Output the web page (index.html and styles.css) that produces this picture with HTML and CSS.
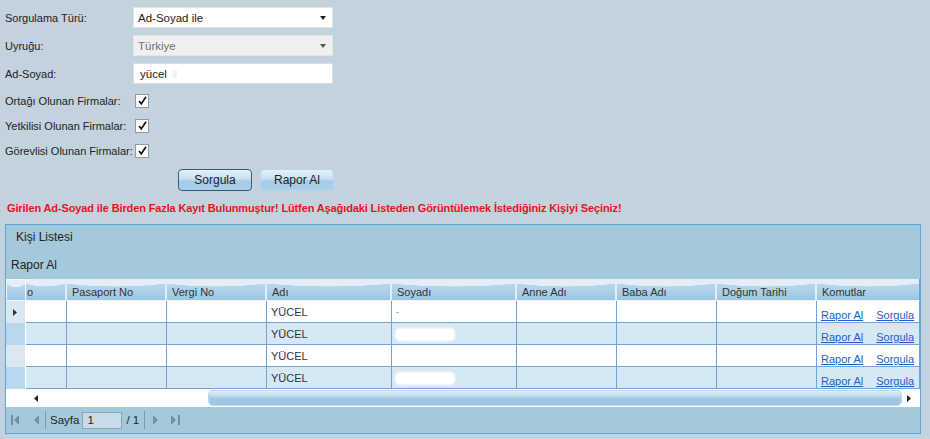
FILE: index.html
```html
<!DOCTYPE html>
<html lang="tr">
<head>
  <meta charset="UTF-8" />
  <title>Kişi Sorgulama</title>
  <link rel="stylesheet" href="styles.css">
</head>
<body>
  <div class="form">
    <div class="row">
      <label>Sorgulama Türü:</label>
      <div class="select">Ad-Soyad ile<span class="caret"></span></div>
    </div>
    <div class="row">
      <label>Uyruğu:</label>
      <div class="select disabled">Türkiye<span class="caret"></span></div>
    </div>
    <div class="row">
      <label>Ad-Soyad:</label>
      <div class="input">yücel<span class="smudge"></span></div>
    </div>
    <div class="row check-row first">
      <label>Ortağı Olunan Firmalar:</label>
      <span class="checkbox"><svg width="11" height="11" viewBox="0 0 11 11"><path d="M2 6 L4.3 8.8 L9 1.8" fill="none" stroke="#111" stroke-width="1.6"/></svg></span>
    </div>
    <div class="row check-row">
      <label>Yetkilisi Olunan Firmalar:</label>
      <span class="checkbox"><svg width="11" height="11" viewBox="0 0 11 11"><path d="M2 6 L4.3 8.8 L9 1.8" fill="none" stroke="#111" stroke-width="1.6"/></svg></span>
    </div>
    <div class="row check-row">
      <label>Görevlisi Olunan Firmalar:</label>
      <span class="checkbox"><svg width="11" height="11" viewBox="0 0 11 11"><path d="M2 6 L4.3 8.8 L9 1.8" fill="none" stroke="#111" stroke-width="1.6"/></svg></span>
    </div>
    <div class="buttons">
      <button class="btn focused">Sorgula</button>
      <button class="btn">Rapor Al</button>
    </div>
  </div>

  <div class="warning">Girilen Ad-Soyad ile Birden Fazla Kayıt Bulunmuştur! Lütfen Aşağıdaki Listeden Görüntülemek İstediğiniz Kişiyi Seçiniz!</div>

  <div class="panel">
    <div class="panel-title">Kişi Listesi</div>
    <div class="toolbar">Rapor Al</div>
    <table class="grid">
      <thead>
        <tr>
          <th class="c-rh"></th>
          <th class="c-tc">o</th>
          <th class="c-100">Pasaport No</th>
          <th class="c-100">Vergi No</th>
          <th class="c-125">Adı</th>
          <th class="c-125">Soyadı</th>
          <th class="c-100">Anne Adı</th>
          <th class="c-100">Baba Adı</th>
          <th class="c-100">Doğum Tarihi</th>
          <th class="c-cmd">Komutlar</th>
        </tr>
      </thead>
      <tbody id="rows"></tbody>
    </table>
    <div class="hscroll">
      <span class="sarrow left"><svg width="4" height="7" viewBox="0 0 4 7"><path d="M4 0 L0 3.5 L4 7 Z" fill="#222"/></svg></span>
      <div class="track"><div class="thumb"></div></div>
      <span class="sarrow right"><svg width="4" height="7" viewBox="0 0 4 7"><path d="M0 0 L4 3.5 L0 7 Z" fill="#222"/></svg></span>
    </div>
    <div class="pager">
      <span class="pbtn first"><svg width="9" height="10" viewBox="0 0 9 10"><rect x="0" y="0" width="2" height="10" fill="#6f8fa3"/><path d="M8 0 L3 5 L8 10 Z" fill="#6f8fa3"/></svg></span>
      <span class="pbtn prev"><svg width="6" height="10" viewBox="0 0 6 10"><path d="M6 0 L1 5 L6 10 Z" fill="#6f8fa3"/></svg></span>
      <span class="psep"></span>
      <span class="ptext">Sayfa</span>
      <span class="pinput">1</span>
      <span class="ptext">/ 1</span>
      <span class="psep"></span>
      <span class="pbtn next"><svg width="6" height="10" viewBox="0 0 6 10"><path d="M0 0 L5 5 L0 10 Z" fill="#6f8fa3"/></svg></span>
      <span class="pbtn"><svg width="9" height="10" viewBox="0 0 9 10"><path d="M0 0 L5 5 L0 10 Z" fill="#6f8fa3"/><rect x="7" y="0" width="2" height="10" fill="#6f8fa3"/></svg></span>
    </div>
  </div>

  <script>
    const people = [
      { ad: "YÜCEL", soyad: "dot" },
      { ad: "YÜCEL", soyad: "blob" },
      { ad: "YÜCEL", soyad: "" },
      { ad: "YÜCEL", soyad: "blob" }
    ];

    const body = document.getElementById('rows');

    people.forEach((p, i) => {
      const tr = document.createElement('tr');
      tr.className = i % 2 ? 'alt' : '';
      const arrow = i === 0 ? '<svg width="4" height="7" viewBox="0 0 4 7"><path d="M0 0 L4 3.5 L0 7 Z" fill="#333"/></svg>' : '';
      let soyad = '';
      if (p.soyad === 'dot') soyad = '<span class="dot"></span>';
      if (p.soyad === 'blob') soyad = '<span class="blob"></span>';
      tr.innerHTML = `
        <td class="rh">${arrow}</td>
        <td></td>
        <td></td>
        <td></td>
        <td>${p.ad}</td>
        <td>${soyad}</td>
        <td></td>
        <td></td>
        <td></td>
        <td class="cmd"><a href="#">Rapor Al</a><a href="#">Sorgula</a></td>
      `;
      body.appendChild(tr);
    });
  </script>
</body>
</html>
```

FILE: styles.css
```css
* {
  box-sizing: border-box;
}
body {
  margin: 0;
  padding: 0 5px;
  font-family: 'Liberation Sans', Arial, sans-serif;
  font-size: 11px;
  color: #222;
  background: #c3d3dd;
}
.form {
  padding-top: 7px;
}
.row {
  display: flex;
  align-items: center;
  height: 21px;
  margin-bottom: 7px;
}
.row label {
  width: 128px;
  flex: none;
}
.select,
.input {
  width: 200px;
  height: 21px;
  background: #fff;
  border: 1px solid #dfe5e9;
  padding: 0 4px;
  display: flex;
  align-items: center;
  position: relative;
  font-size: 11.5px;
}
.select.disabled {
  background: #f0f0f0;
  color: #707070;
  border-color: #e4e4e4;
}
.caret {
  position: absolute;
  right: 6px;
  top: 8px;
  border-left: 3px solid transparent;
  border-right: 3px solid transparent;
  border-top: 4px solid #222;
}
.select.disabled .caret {
  border-top-color: #555;
}
.input {
  padding-left: 6px;
  border-color: #d5dfe6;
}
.smudge {
  display: inline-block;
  width: 4px;
  height: 8px;
  margin-left: 6px;
  background: #eef0f2;
}
.check-row {
  height: 25px;
  margin-bottom: 0;
}
.check-row.first {
  margin-top: -3px;
}
.checkbox {
  margin-left: 2px;
  width: 14px;
  height: 14px;
  background: #fff;
  border: 1px solid #8f9aa3;
  display: flex;
  align-items: center;
  justify-content: center;
}
.buttons {
  display: flex;
  gap: 8px;
  margin-top: 6px;
  padding-left: 173px;
}
.btn {
  width: 74px;
  height: 22px;
  font-family: inherit;
  font-size: 12px;
  color: #222;
  border: 1px solid #b9d6ec;
  border-radius: 4px;
  background: linear-gradient(to bottom, #e4f0f9 0%, #c8e0f1 45%, #a6cce8 55%, #a9cfea 100%);
  padding: 0;
}
.btn.focused {
  border-color: #3d5b78;
}
.warning {
  margin-top: 10px;
  padding-left: 2px;
  color: #e8121b;
  font-weight: bold;
  font-size: 11px;
  letter-spacing: -0.12px;
  height: 15px;
  line-height: 15px;
}
.panel {
  margin-top: 8px;
  width: 916px;
  border: 1px solid #5ea5dc;
  background: #a4c9da;
}
.panel-title {
  height: 25px;
  line-height: 25px;
  padding-left: 10px;
  font-size: 12px;
  border-bottom: 1px solid #b6c6cf;
}
.toolbar {
  height: 29px;
  line-height: 31px;
  padding-left: 5px;
  font-size: 12px;
}
.grid {
  width: 914px;
  table-layout: fixed;
  border-spacing: 0;
  background: #fff;
}
.grid th {
  height: 22px;
  padding: 4px 5px 0;
  text-align: left;
  font-weight: normal;
  font-size: 11px;
  color: #333;
  border-right: 2px solid #e3edf4;
  border-bottom: 1px solid #f2f7fb;
  background: radial-gradient(110% 85% at 50% -25%, #e3eef8 70%, rgba(227, 238, 248, 0) 72%), linear-gradient(#c4dcef, #9bc7e6);
  white-space: nowrap;
  overflow: hidden;
}
.grid th.c-rh {
  width: 20px;
  border: 1px solid #f2f7fb;
}
.grid th.c-tc {
  width: 41px;
  padding-left: 1px;
}
.c-100 {
  width: 100px;
}
.c-125 {
  width: 125px;
}
.grid th.c-cmd {
  width: 103px;
  border-right: 1px solid #5ea5dc;
}
.grid td {
  height: 22px;
  padding: 0 4px;
  border-right: 1px solid #6fa5d6;
  border-bottom: 1px solid #6fa5d6;
  color: #333;
  font-size: 11px;
  white-space: nowrap;
  overflow: hidden;
}
.grid tr.alt td {
  background: #d6e8f4;
}
.grid td.rh {
  background: #d9e8f3;
  border-right: 1px solid #fff;
  border-bottom: none;
  padding: 0 0 0 7px;
}
.grid tr.alt td.rh {
  background: #b9d7ed;
}
.grid td.cmd {
  vertical-align: bottom;
  padding: 0 0 1px 4px;
}
.cmd a {
  color: #1f5fc4;
  margin-right: 13px;
  font-size: 11px;
}
.cmd a:last-child {
  margin-right: 0;
}
.dot {
  display: inline-block;
  width: 3px;
  height: 1px;
  background: #9bb;
  vertical-align: middle;
}
.blob {
  display: inline-block;
  width: 58px;
  height: 11px;
  margin-top: 4px;
  border-radius: 4px;
  background: #fff;
  box-shadow: 0 0 3px 1px #fff;
}
.hscroll {
  display: flex;
  align-items: center;
  height: 18px;
  background: #fff;
}
.sarrow {
  width: 14px;
  display: flex;
  justify-content: center;
}
.sarrow.left {
  margin-left: 23px;
}
.track {
  flex: 1;
  height: 16px;
  padding-left: 165px;
}
.thumb {
  height: 16px;
  border: 1px solid #bcd7ec;
  border-radius: 5px;
  background: linear-gradient(to bottom, #e0eef8 0%, #c2dcef 35%, #9fc8e7 55%, #9bc6e6 100%);
}
.sarrow.right {
  margin-right: 4px;
}
.pager {
  display: flex;
  align-items: center;
  height: 26px;
  padding-left: 5px;
  font-size: 11.5px;
}
.pbtn {
  display: flex;
  margin-right: 12px;
}
.pbtn.first {
  margin-right: 13px;
}
.pbtn.prev {
  margin-right: 6px;
}
.pbtn.next {
  margin-right: 12px;
}
.psep {
  width: 1px;
  height: 18px;
  background: #7d9cb0;
  margin-right: 4px;
}
.ptext {
  color: #222;
  margin-right: 3px;
}
.pinput {
  width: 40px;
  height: 17px;
  background: #c6dce8;
  border: 1px solid #86a6b9;
  padding-left: 4px;
  line-height: 15px;
  margin-right: 4px;
}
.pinput + .ptext {
  margin-right: 5px;
}
.psep + .pbtn {
  margin-left: 4px;
}
```
